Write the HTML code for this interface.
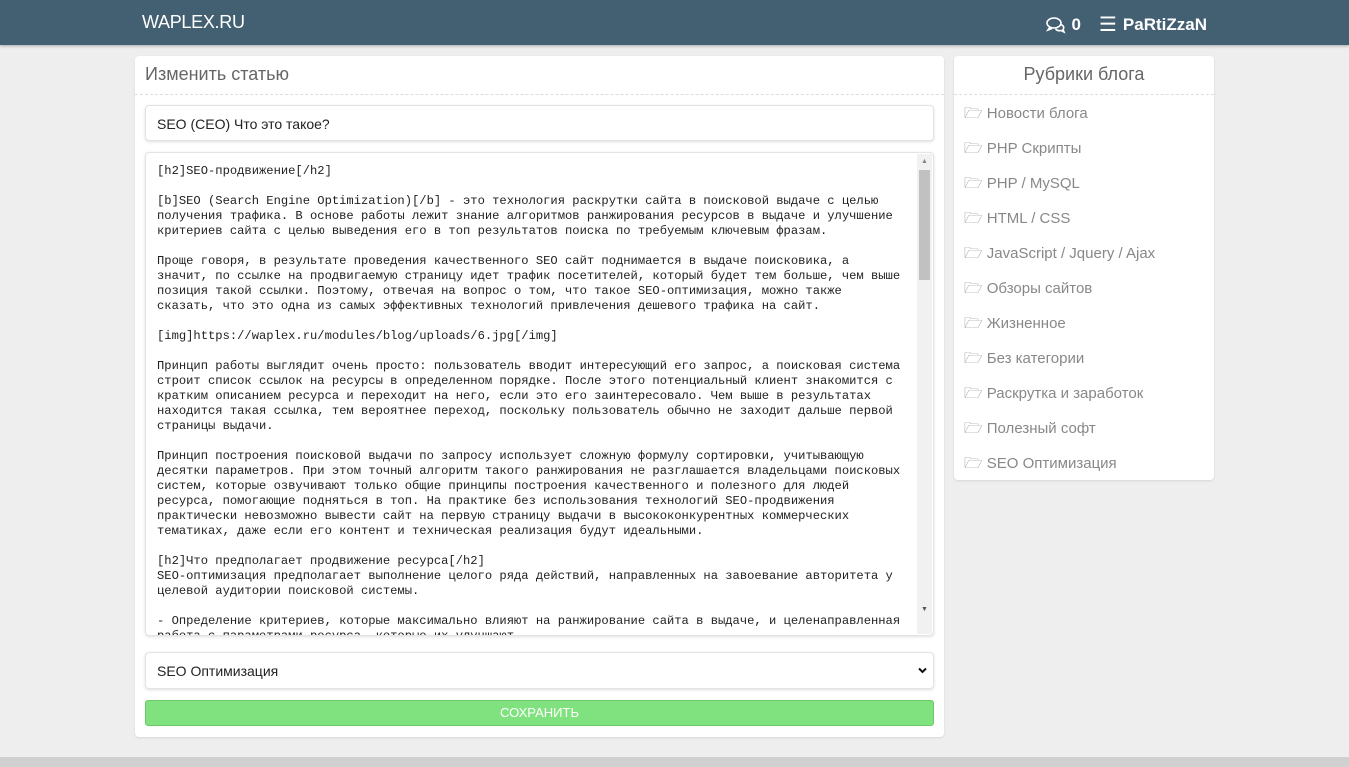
<!DOCTYPE html>
<html><head><meta charset="utf-8"><style>
*{box-sizing:border-box;margin:0;padding:0}
body{width:1349px;height:767px;background:#eeeeee;font-family:"Liberation Sans","DejaVu Sans",sans-serif;position:relative;overflow:hidden}
.hdr{position:absolute;left:0;top:0;width:1349px;height:45px;background:#435f72;color:#fff;box-shadow:0 1px 3px rgba(0,0,0,.3)}
.logo{position:absolute;left:142px;top:12px;font-size:18px;letter-spacing:-0.3px}
.rt{position:absolute;right:142px;top:12px;font-size:17px;display:flex;align-items:center;gap:6px}
.card{position:absolute;background:#fff;border-radius:4px;box-shadow:0 1px 2px rgba(0,0,0,.1)}
.ct{height:39px;border-bottom:1px dashed #ddd;color:#666;font-size:18px;padding:8px 10px}
.field{position:absolute;left:10px;width:789px;background:#fff;border:1px solid #e3e3e3;border-radius:4px;box-shadow:0 1px 3px rgba(0,0,0,.12)}
pre{font-family:"Liberation Mono","DejaVu Sans Mono",monospace;font-size:12.15px;line-height:15px;color:#222;padding:11px 0 0 11px;white-space:pre;overflow:hidden;height:100%}
.sb{position:absolute;right:1px;top:1px;width:15px;bottom:1px;background:#f1f1f1}
.side a{display:block;height:35px;color:#888;font-size:15px;padding:8px 10px;text-decoration:none}
</style></head><body>
<div class="hdr"><div class="logo">WAPLEX.RU</div>
<div class="rt"><svg width="20" height="18" viewBox="0 0 20 18" fill="none" stroke="#fff" stroke-width="1.6"><ellipse cx="8" cy="7" rx="7" ry="5"/><path d="M4 11l-2 3 4-1.5"/><path d="M15 8.5c2.5 1 3.5 3 2 5l1 2.5-3-1.5c-2 .5-4 0-5.5-1.5"/></svg><b>0</b><span style="margin-left:12px;font-size:20px">☰</span><b>PaRtiZzaN</b></div></div>

<div class="card" style="left:135px;top:56px;width:809px;height:681px">
<div class="ct">Изменить статью</div>
<div class="field" style="top:49px;height:36px;font-size:14px;padding:10px 11px;color:#222">SEO (CEO) Что это такое?</div>
<div class="field" style="top:96px;height:484px;overflow:hidden"><pre>[h2]SEO-продвижение[/h2]

[b]SEO (Search Engine Optimization)[/b] - это технология раскрутки сайта в поисковой выдаче с целью
получения трафика. В основе работы лежит знание алгоритмов ранжирования ресурсов в выдаче и улучшение
критериев сайта с целью выведения его в топ результатов поиска по требуемым ключевым фразам.

Проще говоря, в результате проведения качественного SEO сайт поднимается в выдаче поисковика, а
значит, по ссылке на продвигаемую страницу идет трафик посетителей, который будет тем больше, чем выше
позиция такой ссылки. Поэтому, отвечая на вопрос о том, что такое SEO-оптимизация, можно также
сказать, что это одна из самых эффективных технологий привлечения дешевого трафика на сайт.

[img]https://waplex.ru/modules/blog/uploads/6.jpg[/img]

Принцип работы выглядит очень просто: пользователь вводит интересующий его запрос, а поисковая система
строит список ссылок на ресурсы в определенном порядке. После этого потенциальный клиент знакомится с
кратким описанием ресурса и переходит на него, если это его заинтересовало. Чем выше в результатах
находится такая ссылка, тем вероятнее переход, поскольку пользователь обычно не заходит дальше первой
страницы выдачи.

Принцип построения поисковой выдачи по запросу использует сложную формулу сортировки, учитывающую
десятки параметров. При этом точный алгоритм такого ранжирования не разглашается владельцами поисковых
систем, которые озвучивают только общие принципы построения качественного и полезного для людей
ресурса, помогающие подняться в топ. На практике без использования технологий SEO-продвижения
практически невозможно вывести сайт на первую страницу выдачи в высококонкурентных коммерческих
тематиках, даже если его контент и техническая реализация будут идеальными.

[h2]Что предполагает продвижение ресурса[/h2]
SEO-оптимизация предполагает выполнение целого ряда действий, направленных на завоевание авторитета у
целевой аудитории поисковой системы.

- Определение критериев, которые максимально влияют на ранжирование сайта в выдаче, и целенаправленная
работа с параметрами ресурса, которые их улучшают.</pre>
<div class="sb"><div style="position:absolute;top:16px;left:2px;width:11px;height:110px;background:#c1c1c1"></div>
<div style="position:absolute;top:4px;left:4px;font-size:7px;color:#888">▲</div>
<div style="position:absolute;top:452px;left:4px;font-size:7px;color:#555">▼</div></div></div>
<div class="field" style="top:596px;height:37px;font-size:14px;padding:10px 11px;color:#222">SEO Оптимизация<svg style="position:absolute;right:6px;top:14px" width="9" height="7" viewBox="0 0 9 7"><path d="M1 1.5l3.5 3.5 3.5-3.5" fill="none" stroke="#111" stroke-width="2"/></svg></div>
<div style="position:absolute;left:10px;top:644px;width:789px;height:26px;background:#80e27e;border:1px solid #6cc96a;border-radius:3px;color:#fff;font-size:13px;text-align:center;line-height:24px">СОХРАНИТЬ</div>
</div>

<div class="card" style="left:954px;top:56px;width:260px;height:424px">
<div class="ct" style="text-align:center">Рубрики блога</div>
<div class="side">
<a>🗁 Новости блога</a><a>🗁 PHP Скрипты</a><a>🗁 PHP / MySQL</a><a>🗁 HTML / CSS</a><a>🗁 JavaScript / Jquery / Ajax</a><a>🗁 Обзоры сайтов</a><a>🗁 Жизненное</a><a>🗁 Без категории</a><a>🗁 Раскрутка и заработок</a><a>🗁 Полезный софт</a><a>🗁 SEO Оптимизация</a>
</div></div>
<div style="position:absolute;left:0;top:757px;width:1349px;height:10px;background:#d0d0d0"></div>
</body></html>
